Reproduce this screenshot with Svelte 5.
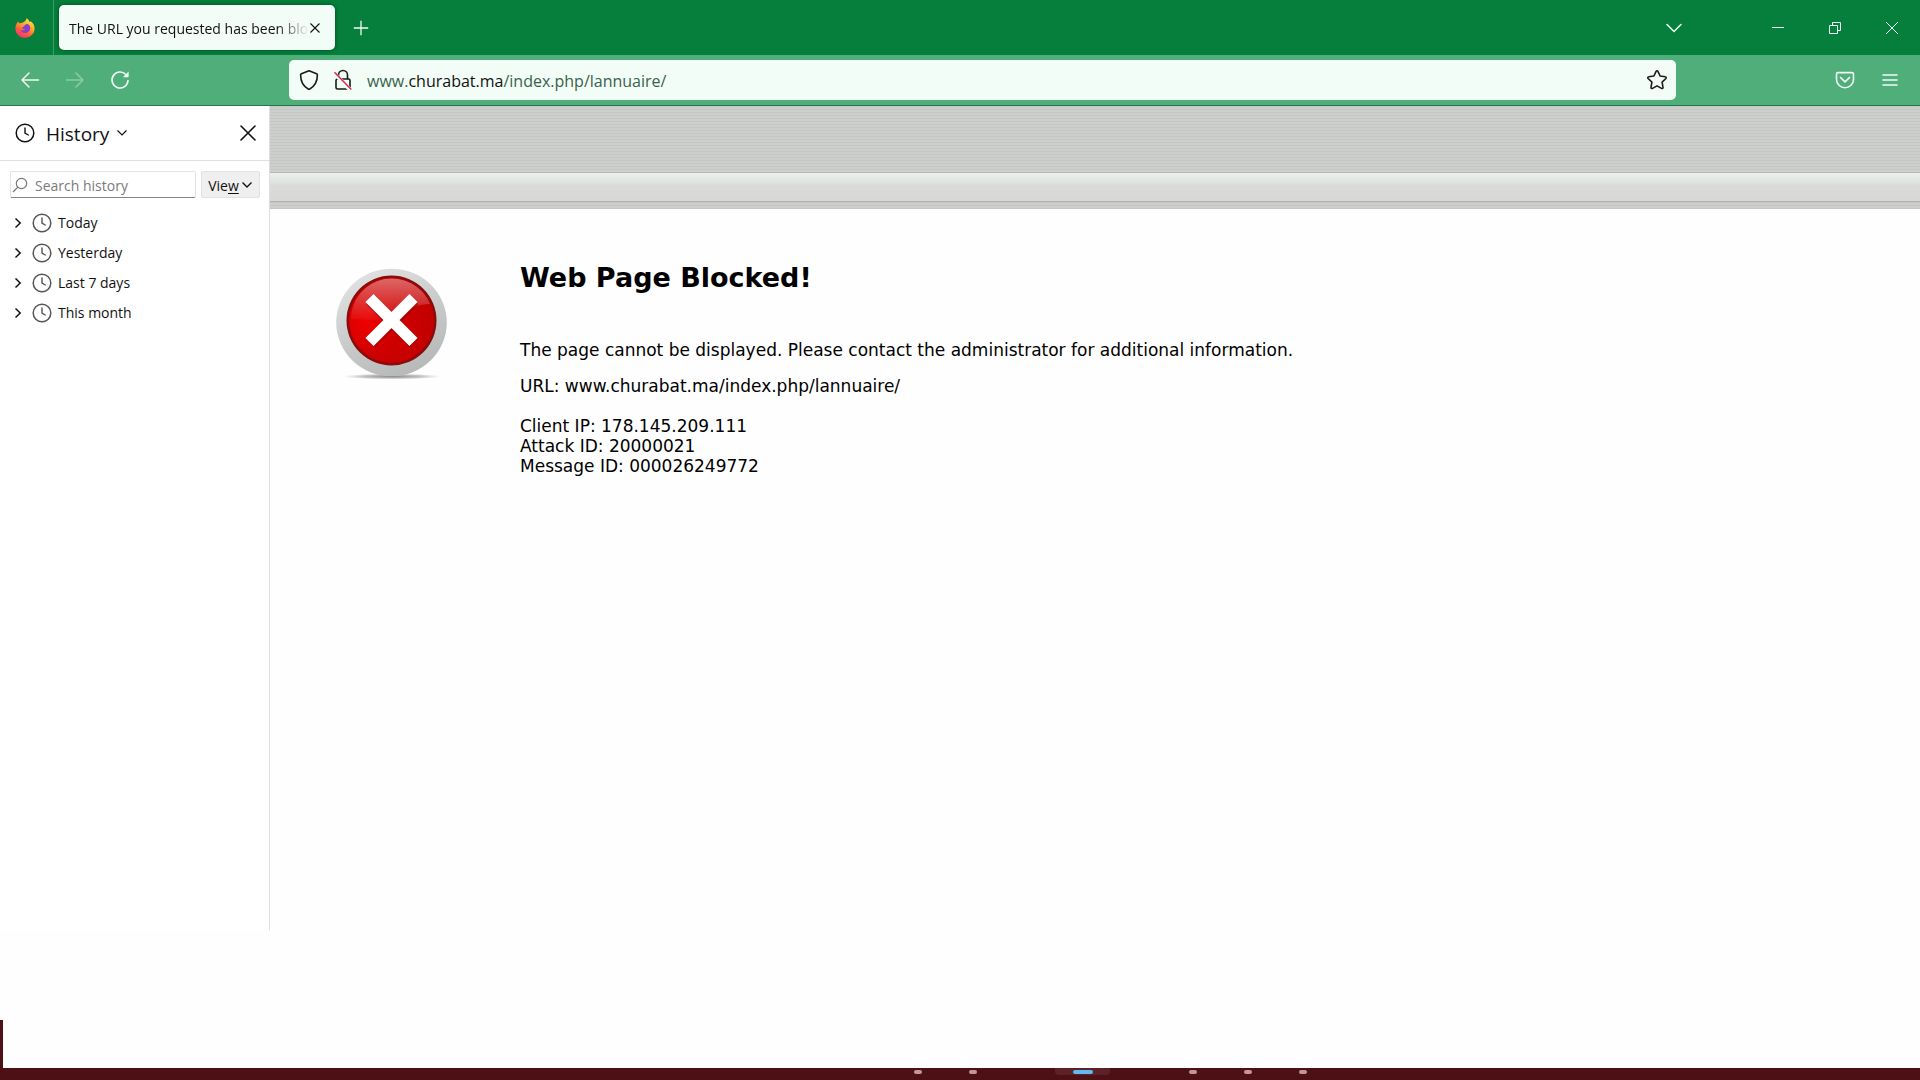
<script lang="ts">
	const periods = ['Today', 'Yesterday', 'Last 7 days', 'This month'];
	const slots = ['open', 'open', '', 'active', '', 'open', 'open', 'open'];
	const details = [
		{ label: 'Client IP', value: '178.145.209.111' },
		{ label: 'Attack ID', value: '20000021' },
		{ label: 'Message ID', value: '000026249772' }
	];

	let search = $state('');
	let url = 'www.churabat.ma/index.php/lannuaire/';
</script>

{#snippet clock()}
	<svg class="clock" viewBox="0 0 20 20" width="20" height="20" fill="none" stroke="currentColor">
		<circle cx="10" cy="10" r="8.8" stroke-width="1.5" />
		<path d="M10 5v5.2l3.3 1.8" stroke-width="1.4" stroke-linecap="round" />
	</svg>
{/snippet}

<div class="screen">
	<header class="tabs">
		<div class="logo">
			<svg viewBox="0 0 20 20" width="20" height="20">
				<defs>
					<linearGradient id="fire" x1="0.8" y1="0" x2="0.25" y2="1">
						<stop offset="0" stop-color="#fff14a" />
						<stop offset="0.4" stop-color="#ffa52b" />
						<stop offset="0.7" stop-color="#ff5a3e" />
						<stop offset="1" stop-color="#f0307a" />
					</linearGradient>
				</defs>
				<path
					d="M3.3 3.4c.3 1 .7 1.5 1.3 2C5.6 4.7 6.7 4.5 7.7 4.7 9.2 3.9 10 3 10.7 2.5c.5-1 .8-1.7 1-2.3 1.500 1 2.300 2.200 2.800 3.600.5.1 1-.1 1.200-.5 2.600 2 3.900 4.500 3.900 7.200 0 5.200-4.300 9.300-9.600 9.300S.4 15.700.4 10.400C.4 7.800 1.400 5.300 3.300 3.400z"
					fill="url(#fire)"
				/>
				<path
					d="M6 8.200c1-.9 2.300-.7 3.200-.2.8-1.500 2.100-2.200 3.500-2 2 1 2.700 2.800 2.500 4.700-.3 2.500-2.400 4.200-4.900 4.200-2.300 0-4.200-1.500-4.600-3.500 1.500 1.100 3.200.9 4.400 0-.9-.4-3.200-.5-3.200-1.900 0-.6.5-1 1-1z"
					fill="#8540c8"
				/>
				<path d="M6 8.200c1-.9 2.300-.7 3.200-.2-.6.800-1.500 1-2.200 1.200z" fill="#ffb52e" />
			</svg>
		</div>
		<div class="tab">
			<span class="tab-title label">The URL you requested has been blocked</span>
			<button class="tab-close" aria-label="Close tab">
				<svg viewBox="0 0 12 12" width="12" height="12" stroke="currentColor">
					<path d="M1.500 1.500l9 9M10.500 1.500l-9 9" stroke-width="1.1" />
				</svg>
			</button>
		</div>
		<button class="new-tab" aria-label="New tab">
			<svg viewBox="0 0 16 16" width="16" height="16" stroke="currentColor">
				<path d="M8 .8v14.400M.8 8h14.400" stroke-width="1.300" />
			</svg>
		</button>
		<button class="list-tabs" aria-label="List all tabs">
			<svg viewBox="0 0 16 10" width="16" height="10" fill="none" stroke="currentColor">
				<path d="M1 1.500l7 7 7-7" stroke-width="1.500" stroke-linecap="round" />
			</svg>
		</button>
		<div class="window-controls">
			<button aria-label="Minimize">
				<svg viewBox="0 0 14 14" width="14" height="14" stroke="currentColor">
					<path d="M1 6.500h12" />
				</svg>
			</button>
			<button aria-label="Restore">
				<svg viewBox="0 0 14 14" width="14" height="14" fill="none" stroke="currentColor">
					<path d="M1.500 4.500h8v8h-8zM4.500 4.500v-3h8v8h-3" />
				</svg>
			</button>
			<button aria-label="Close">
				<svg viewBox="0 0 14 14" width="14" height="14" stroke="currentColor">
					<path d="M1 1l12 12M13 1L1 13" />
				</svg>
			</button>
		</div>
	</header>

	<nav class="toolbar">
		<button aria-label="Back">
			<svg viewBox="0 0 20 20" width="20" height="20" fill="none" stroke="currentColor">
				<path d="M18.500 10H2M9 3L2 10l7 7" stroke-width="1.500" stroke-linecap="round" stroke-linejoin="round" />
			</svg>
		</button>
		<button aria-label="Forward" disabled>
			<svg viewBox="0 0 20 20" width="20" height="20" fill="none" stroke="currentColor">
				<path d="M1.500 10H18M11 3l7 7-7 7" stroke-width="1.500" stroke-linecap="round" stroke-linejoin="round" />
			</svg>
		</button>
		<button aria-label="Reload">
			<svg viewBox="0 0 20 20" width="20" height="20" fill="none" stroke="currentColor">
				<path d="M15.800 4.500A8 8 0 1 0 18 10.500" stroke-width="1.600" stroke-linecap="round" />
				<path d="M18.600 1.500v5.200c0 .3-.2.5-.5.5h-5.200z" fill="currentColor" stroke="none" />
			</svg>
		</button>
		<div class="urlbar">
			<button aria-label="Tracking protection">
				<svg viewBox="0 0 20 22" width="20" height="22" fill="none" stroke="currentColor">
					<path
						d="M10 1.800l7.600 2.900c.5.2.8.6.8 1.100 0 6-1.900 11-7.600 14.200-.5.3-1.100.3-1.600 0C3.500 16.800 1.600 11.800 1.600 5.800c0-.5.3-.9.8-1.100z"
						stroke-width="1.600"
						stroke-linejoin="round"
					/>
				</svg>
			</button>
			<button aria-label="Connection is not secure">
				<svg viewBox="0 0 20 22" width="20" height="22" fill="none" stroke="currentColor">
					<rect x="3" y="10" width="14" height="10" rx="1.500" stroke-width="1.600" />
					<path d="M5.500 10V6a4.500 4.500 0 0 1 9 0v4" stroke-width="1.600" />
					<path d="M.8 3.800L17.600 21.200" stroke="#f3fdf7" stroke-width="4" />
					<path d="M1.500 3.200L18.300 20.400" stroke="#d7264f" stroke-width="1.500" />
				</svg>
			</button>
			<a class="address label" href="#top">www.<b>churabat.ma</b>/index.php/lannuaire/</a>
			<button aria-label="Bookmark this page">
				<svg viewBox="0 0 22 22" width="22" height="22" fill="none" stroke="currentColor">
					<path
						d="M10.100 2.300c.4-.8 1.400-.8 1.800 0l2.200 4.700 5.200.7c.9.1 1.200 1.200.6 1.800l-3.800 3.600.9 5.200c.2.900-.7 1.500-1.500 1.100L11 16.900l-4.500 2.500c-.8.400-1.700-.2-1.500-1.100l.9-5.200-3.800-3.600c-.6-.6-.3-1.700.6-1.800L7.900 7z"
						stroke-width="1.600"
						stroke-linejoin="round"
					/>
				</svg>
			</button>
		</div>
		<button class="pocket" aria-label="Save to Pocket">
			<svg viewBox="0 0 20 18" width="20" height="18" fill="none" stroke="currentColor">
				<path
					d="M3 1.600h14c.9 0 1.500.6 1.500 1.500v5.400a8.500 8.200 0 0 1-17 0V3.100c0-.9.6-1.500 1.500-1.500z"
					stroke-width="1.600"
				/>
				<path d="M5.500 6.500l4.500 4.300 4.500-4.300" stroke-width="1.700" stroke-linecap="round" stroke-linejoin="round" />
			</svg>
		</button>
		<button aria-label="Open application menu">
			<svg viewBox="0 0 16 14" width="16" height="14" stroke="currentColor">
				<path d="M1 2h14M1 7h14M1 12h14" stroke-width="1.500" stroke-linecap="round" />
			</svg>
		</button>
	</nav>

	<div class="content">
		<aside class="sidebar">
			<div class="sidebar-header">
				<button class="switcher">
					{@render clock()}
					<span class="label">History</span>
					<svg viewBox="0 0 12 8" width="12" height="8" fill="none" stroke="currentColor">
						<path d="M1.500 1.500L6 6l4.500-4.500" stroke-width="1.200" />
					</svg>
				</button>
				<button class="sidebar-close" aria-label="Close sidebar">
					<svg viewBox="0 0 16 16" width="16" height="16" stroke="currentColor">
						<path d="M1 1l14 14M15 1L1 15" stroke-width="1.600" stroke-linecap="round" />
					</svg>
				</button>
			</div>
			<div class="search-row">
				<label class="search">
					<svg viewBox="0 0 16 16" width="16" height="16" fill="none" stroke="currentColor">
						<circle cx="9.500" cy="6.500" r="5.200" stroke-width="1.200" />
						<path d="M5.800 10.200L1 15" stroke-width="1.200" />
					</svg>
					<input
						class="label"
						type="text"
						placeholder="Search history"
						aria-label="Search history"
						bind:value={search}
					/>
				</label>
				<button class="view">
					<span class="label">Vie<u>w</u></span>
					<svg viewBox="0 0 12 8" width="12" height="8" fill="none" stroke="currentColor">
						<path d="M1.500 1.500L6 6l4.500-4.500" stroke-width="1.400" />
					</svg>
				</button>
			</div>
			<ul class="periods">
				{#each periods as period}
					<li>
						<button>
							<svg viewBox="0 0 8 12" width="8" height="12" fill="none" stroke="currentColor">
								<path d="M1.500 1.500L6.200 6l-4.700 4.500" stroke-width="1.500" />
							</svg>
							{@render clock()}
							<span>{period}</span>
						</button>
					</li>
				{/each}
			</ul>
		</aside>

		<main class="page" id="top">
			<div class="banner">
				<div class="stripes"></div>
				<div class="shine"></div>
				<div class="base"></div>
			</div>
			<div class="message">
				<svg class="blocked-icon" viewBox="0 0 112 114" width="112" height="114">
					<defs>
						<linearGradient id="ring" x1="0.2" y1="0" x2="0.7" y2="1">
							<stop offset="0" stop-color="#e2e4e3" />
							<stop offset="0.5" stop-color="#c9cccb" />
							<stop offset="1" stop-color="#b5b8b7" />
						</linearGradient>
						<radialGradient id="red" cx="0.2" cy="0.52" r="0.8">
							<stop offset="0" stop-color="#f00000" />
							<stop offset="0.45" stop-color="#cf0000" />
							<stop offset="1" stop-color="#c20000" />
						</radialGradient>
						<linearGradient id="gloss" x1="0" y1="0" x2="0" y2="1">
							<stop offset="0" stop-color="#fff" stop-opacity="0.4" />
							<stop offset="1" stop-color="#fff" stop-opacity="0.04" />
						</linearGradient>
						<radialGradient id="ground">
							<stop offset="0" stop-color="#888" />
							<stop offset="0.6" stop-color="#aaa" stop-opacity="0.7" />
							<stop offset="1" stop-color="#ccc" stop-opacity="0" />
						</radialGradient>
					</defs>
					<ellipse cx="56" cy="108.500" rx="50" ry="3" fill="url(#ground)" />
					<ellipse cx="55.500" cy="54.500" rx="55.300" ry="53.800" fill="url(#ring)" />
					<circle cx="55.500" cy="52.500" r="45" fill="#8d0a0a" />
					<circle cx="55.500" cy="52.500" r="42.500" fill="url(#red)" />
					<path d="M15 51a41 41 0 0 1 79-15C76 35 57 53 36 52c-8 0-15-1-21-1z" fill="url(#gloss)" />
					<path d="M35 32l43 43M78 32L35 75" stroke="#8c0000" stroke-opacity="0.5" stroke-width="13" />
					<path d="M33.500 30l44 44M77.500 30l-44 44" stroke="#fff" stroke-width="11.500" />
				</svg>
				<div class="text">
					<h1>Web Page Blocked!</h1>
					<p>The page cannot be displayed. Please contact the administrator for additional information.</p>
					<p>URL: {url}</p>
					<div class="details">
						{#each details as { label, value }}
							<div>{label}: {value}</div>
						{/each}
					</div>
				</div>
			</div>
		</main>
	</div>

	<div class="blank">
		<div class="edge"></div>
	</div>

	<footer class="taskbar">
		<div class="taskbar-start"></div>
		{#each slots as slot}
			<div class={['slot', slot]}></div>
		{/each}
	</footer>
</div>

<style>
	:global(body) {
		margin: 0;
		background: #fefefe;
	}

	.screen {
		display: flex;
		flex-direction: column;
		min-height: 100vh;
		color: #111;
		font-family: 'Segoe UI', 'Open Sans', sans-serif;
		font-size: 14px;
		line-height: 20px;
	}

	button {
		display: flex;
		align-items: center;
		justify-content: center;
		flex: none;
		padding: 0;
		border: none;
		background: none;
		color: inherit;
		font: inherit;
	}

	svg {
		display: block;
		flex: none;
	}

	.label {
		padding-top: 2px;
	}

	.tabs {
		display: flex;
		align-items: center;
		height: 55px;
		background: #057f3b;
		color: #effbf4;
	}

	.logo {
		display: flex;
		align-items: center;
		align-self: stretch;
		padding: 0 18px 0 15px;
		border-right: 1px solid #3b9c64;
	}

	.tab {
		display: flex;
		align-items: center;
		box-sizing: border-box;
		width: 276px;
		height: 45px;
		margin-left: 5px;
		padding: 0 14px 0 10px;
		border-radius: 5px;
		background: #f3fdf7;
		box-shadow: 0 0 4px rgba(0, 40, 15, 0.6);
		color: #111;
	}

	.tab-title {
		flex: 1;
		overflow: hidden;
		white-space: nowrap;
		mask-image: linear-gradient(to left, transparent, #000 32px);
	}

	.new-tab {
		width: 32px;
		margin-left: 10px;
	}

	.list-tabs {
		width: 32px;
		margin-left: auto;
		margin-right: 59px;
	}

	.window-controls {
		display: flex;
	}

	.window-controls button {
		width: 57px;
		height: 55px;
	}

	.toolbar {
		display: flex;
		align-items: center;
		height: 50px;
		padding: 0 14px 0 7px;
		border-bottom: 1px solid #237a49;
		background: #4fae7a;
		color: #f0fbf5;
	}

	.toolbar > button {
		width: 45px;
		height: 40px;
	}

	.toolbar > button:last-child {
		width: 32px;
	}

	.toolbar > button:disabled {
		color: #8bcca8;
	}

	.toolbar > .pocket {
		width: 44px;
		margin-left: auto;
		margin-right: 7px;
	}

	.urlbar {
		display: flex;
		align-items: center;
		flex: 0 1 1387px;
		box-sizing: border-box;
		height: 40px;
		margin-left: 147px;
		padding: 0 8px 0 10px;
		border-radius: 5px;
		background: #f3fdf7;
		color: #161c19;
	}

	.urlbar button {
		margin-right: 14px;
	}

	.urlbar button:last-child {
		margin-right: 0;
	}

	.address {
		flex: 1;
		color: #39624c;
		font-size: 16px;
		text-decoration: none;
	}

	.address b {
		color: #111;
		font-weight: 400;
	}

	.content {
		display: flex;
		flex: 1;
	}

	.sidebar {
		flex: none;
		width: 269px;
		border-right: 1px solid #dedede;
		background: #fff;
	}

	.sidebar-header {
		display: flex;
		align-items: center;
		justify-content: space-between;
		height: 54px;
		padding: 0 13px 0 15px;
		border-bottom: 1px solid #e0e0e0;
	}

	.switcher {
		gap: 7px;
		font-size: 19px;
	}

	.switcher .clock {
		margin-right: 4px;
	}

	.search-row {
		display: flex;
		gap: 5px;
		padding: 10px 9px 10px 10px;
	}

	.search {
		display: flex;
		align-items: center;
		flex: 1;
		gap: 7px;
		min-width: 0;
		height: 25px;
		padding-left: 1px;
		border: 1px solid #e2e2e2;
		border-bottom-color: #858585;
		border-radius: 2px;
		color: #777;
	}

	.search input {
		flex: 1;
		min-width: 0;
		padding-right: 0;
		padding-bottom: 0;
		padding-left: 0;
		border: none;
		outline: none;
		background: none;
		color: #111;
		font: inherit;
	}

	.search input::placeholder {
		color: #7b7b7b;
	}

	.view {
		gap: 2px;
		width: 59px;
		border: 1px solid #e2e2e2;
		border-radius: 2px;
		background: #efefef;
	}

	u {
		text-underline-offset: 2px;
	}

	.periods {
		margin: 0;
		padding: 0;
		list-style: none;
	}

	.periods button {
		gap: 6px;
		height: 30px;
		padding-left: 14px;
	}

	.periods .clock {
		margin-left: 4px;
		color: #555;
	}

	.page {
		flex: 1;
		min-width: 0;
		color: #000;
		font-family: Verdana, 'DejaVu Sans', sans-serif;
		font-size: 17px;
	}

	.stripes {
		height: 66px;
		border-bottom: 1px solid #b7b8b5;
		background: repeating-linear-gradient(#c5c7c4 0 1px, #cdcfcc 1px 3px);
	}

	.shine {
		height: 28px;
		background: linear-gradient(#ecefec, #e2e4e1 30%, #dadbd9 45%, #d8d9d7);
	}

	.base {
		height: 7px;
		border-top: 1px solid #b0b1ae;
		background: repeating-linear-gradient(#c5c7c4 0 1px, #cdcfcc 1px 3px);
	}

	.message {
		display: flex;
		align-items: flex-start;
		gap: 72px;
		padding: 51px 66px;
	}

	.blocked-icon {
		margin-top: 8px;
	}

	h1 {
		margin: 0 0 44px;
		font-size: 27px;
		line-height: 36px;
	}

	p {
		margin: 0 0 16px;
	}

	.details {
		margin-top: 20px;
	}

	.blank {
		display: flex;
		align-items: flex-end;
		height: 138px;
	}

	.edge {
		width: 3px;
		height: 48px;
		background: #4d1015;
	}

	.taskbar {
		display: flex;
		justify-content: center;
		height: 12px;
		background: #4d1015;
	}

	.taskbar-start {
		width: 300px;
	}

	.slot {
		display: flex;
		justify-content: center;
		width: 55px;
	}

	.slot::before {
		width: 8px;
		height: 4px;
		margin-top: 2px;
		border-radius: 2px;
	}

	.slot.open::before {
		content: '';
		background: #c39799;
	}

	.slot.active {
		height: 7px;
		border-radius: 0 0 4px 4px;
		background: #5d2227;
	}

	.slot.active::before {
		content: '';
		width: 20px;
		background: #62b9f0;
	}
</style>
